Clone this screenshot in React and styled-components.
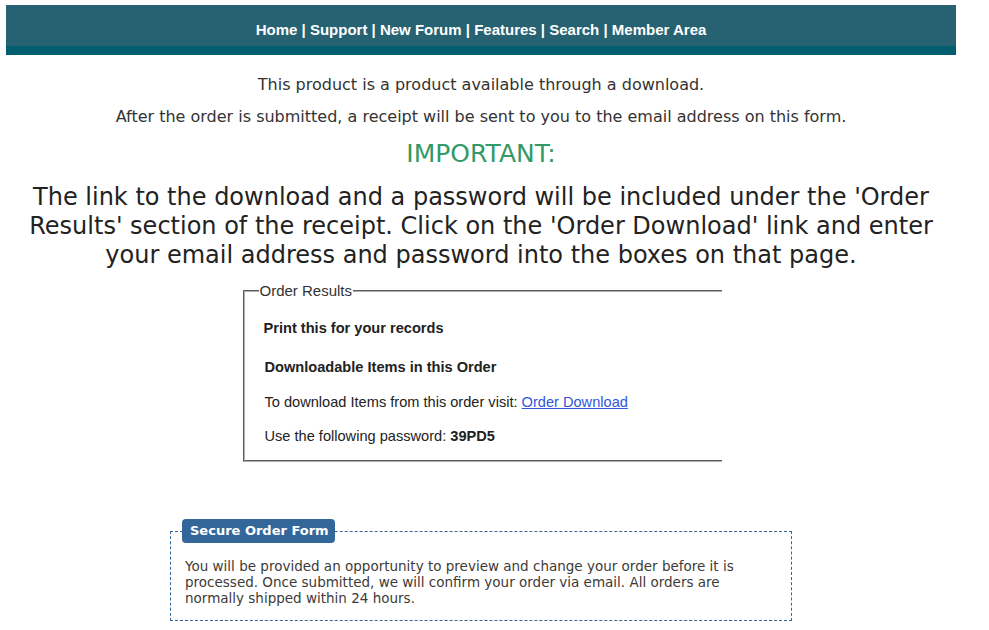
import React from "react";
import styled, { createGlobalStyle } from "styled-components";

const Global = createGlobalStyle`
  html, body { margin: 0; padding: 0; background: #fff; }
  body { font-family: "DejaVu Sans", Verdana, sans-serif; color: #333; }
`;

const Page = styled.div`
  width: 950px;
  margin: 5px 0 0 6px;
  display: flex;
  flex-direction: column;
  align-items: center;
`;

const NavBar = styled.nav`
  align-self: stretch;
  background: #276273;
  border-bottom: 9px solid #005e6e;
  display: flex;
  align-items: center;
  justify-content: center;
  padding-top: 8px;
  box-sizing: content-box;
  height: 33px;
  font-family: "Liberation Sans", Arial, sans-serif;
  font-weight: bold;
  font-size: 15px;
  color: #fff;
  white-space: pre;
`;

const NavLink = styled.a`
  color: #fff;
  text-decoration: none;
`;

const Intro = styled.p`
  margin: ${(p) => p.$mt || 0}px 0 0;
  font-size: 16px;
  line-height: 20px;
  text-align: center;
  color: #333;
`;

const Important = styled.p`
  margin: 12px 0 0;
  font-size: 25px;
  line-height: 30px;
  color: #339966;
  text-align: center;
`;

const BigNote = styled.p`
  margin: 14px 0 0;
  font-size: 24px;
  line-height: 29px;
  text-align: center;
  color: #222;
`;

const ResultsSet = styled.fieldset`
  margin: 13px 0 0 2px;
  width: 479px;
  box-sizing: border-box;
  border: 2px groove #b0b0b0;
  border-right: none;
  padding: 0 0 15px 19px;
  font-family: "Liberation Sans", Arial, sans-serif;
  font-size: 14.6px;
  color: #222;
  min-inline-size: 0;
`;

const ResultsLegend = styled.legend`
  margin-left: -5px;
  padding: 0 1px;
  font-size: 15px;
  line-height: 16px;
  color: #333;
`;

const Row = styled.div`
  margin-top: ${(p) => p.$mt}px;
  line-height: 18px;
  font-weight: ${(p) => (p.$bold ? "bold" : "normal")};
  margin-left: ${(p) => p.$ml || 0}px;
`;

const Strong = styled.b`
  font-weight: bold;
`;

const DLink = styled.a`
  color: #3355dd;
  text-decoration: underline;
`;

const SecureSet = styled.fieldset`
  margin: 57px 0 0;
  width: 622px;
  box-sizing: border-box;
  border: 1px dashed #336699;
  padding: 15px 14px 14px 14px;
  min-inline-size: 0;
`;

const SecureLegend = styled.legend`
  margin-left: -3px;
  padding: 0 6px 0 8px;
  height: 24px;
  line-height: 24px;
  background: #336699;
  color: #fff;
  border-radius: 4px;
  font-family: "DejaVu Sans", Verdana, sans-serif;
  font-weight: bold;
  font-size: 13px;
`;

const SecureText = styled.p`
  margin: 0;
  font-size: 13.5px;
  line-height: 16px;
  color: #3d3b38;
`;

const links = ["Home", "Support", "New Forum", "Features", "Search", "Member Area"];

export default function App() {
  return (
    <>
      <Global />
      <Page>
        <NavBar>
          {links.map((l, i) => (
            <React.Fragment key={l}>
              {i > 0 && " | "}
              <NavLink href="#">{l}</NavLink>
            </React.Fragment>
          ))}
        </NavBar>
        <Intro $mt={20}>This product is a product available through a download.</Intro>
        <Intro $mt={12}>
          After the order is submitted, a receipt will be sent to you to the email address on this form.
        </Intro>
        <Important>IMPORTANT:</Important>
        <BigNote>
          The link to the download and a password will be included under the 'Order
          <br />
          Results' section of the receipt. Click on the 'Order Download' link and enter
          <br />
          your email address and password into the boxes on that page.
        </BigNote>
        <ResultsSet>
          <ResultsLegend>Order Results</ResultsLegend>
          <Row $mt={20} $bold>Print this for your records</Row>
          <Row $mt={21} $bold $ml={1}>Downloadable Items in this Order</Row>
          <Row $mt={17} $ml={1}>
            To download Items from this order visit: <DLink href="#">Order Download</DLink>
          </Row>
          <Row $mt={16} $ml={1}>
            Use the following password: <Strong>39PD5</Strong>
          </Row>
        </ResultsSet>
        <SecureSet>
          <SecureLegend>Secure Order Form</SecureLegend>
          <SecureText>
            You will be provided an opportunity to preview and change your order before it is
            <br />
            processed. Once submitted, we will confirm your order via email. All orders are
            <br />
            normally shipped within 24 hours.
          </SecureText>
        </SecureSet>
      </Page>
    </>
  );
}
